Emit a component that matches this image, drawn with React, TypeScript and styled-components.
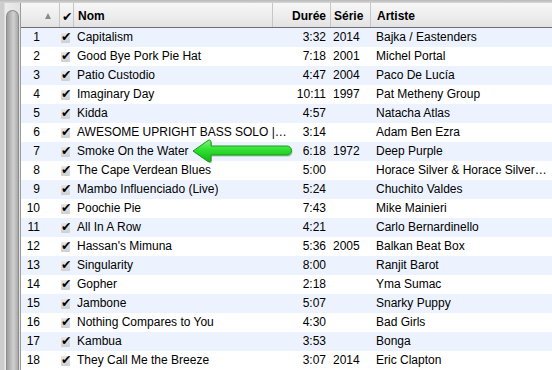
import React from "react";
import styled, { createGlobalStyle } from "styled-components";

interface Track {
  title: string;
  time: string;
  year: string;
  artist: string;
}

const tracks: Track[] = [
  { title: "Capitalism", time: "3:32", year: "2014", artist: "Bajka / Eastenders" },
  { title: "Good Bye Pork Pie Hat", time: "7:18", year: "2001", artist: "Michel Portal" },
  { title: "Patio Custodio", time: "4:47", year: "2004", artist: "Paco De Lucía" },
  { title: "Imaginary Day", time: "10:11", year: "1997", artist: "Pat Metheny Group" },
  { title: "Kidda", time: "4:57", year: "", artist: "Natacha Atlas" },
  { title: "AWESOME UPRIGHT BASS SOLO |…", time: "3:14", year: "", artist: "Adam Ben Ezra" },
  { title: "Smoke On the Water", time: "6:18", year: "1972", artist: "Deep Purple" },
  { title: "The Cape Verdean Blues", time: "5:00", year: "", artist: "Horace Silver & Horace Silver…" },
  { title: "Mambo Influenciado (Live)", time: "5:24", year: "", artist: "Chuchito Valdes" },
  { title: "Poochie Pie", time: "7:43", year: "", artist: "Mike Mainieri" },
  { title: "All In A Row", time: "4:21", year: "", artist: "Carlo Bernardinello" },
  { title: "Hassan's Mimuna", time: "5:36", year: "2005", artist: "Balkan Beat Box" },
  { title: "Singularity", time: "8:00", year: "", artist: "Ranjit Barot" },
  { title: "Gopher", time: "2:18", year: "", artist: "Yma Sumac" },
  { title: "Jambone", time: "5:07", year: "", artist: "Snarky Puppy" },
  { title: "Nothing Compares to You", time: "4:30", year: "", artist: "Bad Girls" },
  { title: "Kambua", time: "3:53", year: "", artist: "Bonga" },
  { title: "They Call Me the Breeze", time: "3:07", year: "2014", artist: "Eric Clapton" },
];

const GlobalStyle = createGlobalStyle`
  html, body {
    margin: 0;
    padding: 0;
    background: #fff;
  }
  body {
    font-family: "Liberation Sans", Arial, sans-serif;
    font-size: 12px;
    color: #000;
  }
`;

const COLUMNS = "38px 14px 199px 58px 40px 1fr";

const Window = styled.div`
  position: relative;
  width: 552px;
  height: 370px;
  overflow: hidden;
  display: flex;
  flex-direction: column;
`;

const TopStrip = styled.div`
  height: 3px;
  flex: none;
  background: linear-gradient(#b9b9b9, #d6d6d6);
`;

const Body = styled.div`
  flex: 1;
  display: flex;
  min-height: 0;
`;

const ScrollTrack = styled.div`
  flex: none;
  width: 21px;
  box-sizing: border-box;
  border-right: 1px solid #9c9c9c;
  background: linear-gradient(
    to right,
    #cdcdcd 0,
    #cdcdcd 4px,
    #ececec 5px,
    #e2e2e2 20px
  );
  padding: 7px 1px 0 6px;
`;

const ScrollThumb = styled.div`
  height: 100%;
  border: 1px solid #8c8c8c;
  border-bottom: none;
  border-radius: 7px 7px 0 0;
  background: linear-gradient(
    to right,
    #9d9d9d 0,
    #c4c4c4 45%,
    #d0d0d0 60%,
    #a9a9a9 100%
  );
`;

const Table = styled.div`
  flex: 1;
  display: flex;
  flex-direction: column;
  min-width: 0;
`;

const HeaderRow = styled.div`
  display: grid;
  grid-template-columns: ${COLUMNS};
  height: 24px;
  border-bottom: 1px solid #6e6e6e;
  background: linear-gradient(#f7f7f7, #ececec 60%, #e2e2e2);
  flex: none;
`;

const HeaderCell = styled.div<{ $align?: "left" | "right" | "center"; $pad?: string; $divider?: boolean }>`
  font-weight: bold;
  line-height: 21px;
  padding-top: 3px;
  text-align: ${(p) => p.$align || "left"};
  padding-left: ${(p) => (p.$align === "right" ? "0" : p.$pad || "0")};
  padding-right: ${(p) => (p.$align === "right" ? p.$pad || "0" : "0")};
  border-left: ${(p) => (p.$divider ? "1px solid #c6c6c6" : "none")};
  white-space: nowrap;
  overflow: hidden;
  box-sizing: border-box;
`;

const SortArrow = styled.span`
  display: inline-block;
  margin-left: 24px;
  width: 0;
  height: 0;
  border-left: 3.5px solid transparent;
  border-right: 3.5px solid transparent;
  border-bottom: 6px solid #8a8a8a;
  vertical-align: 1px;
`;

const Row = styled.div<{ $odd: boolean }>`
  display: grid;
  grid-template-columns: ${COLUMNS};
  height: 19px;
  line-height: 19px;
  flex: none;
  background: ${(p) => (p.$odd ? "#edf3fe" : "#ffffff")};
`;

const Cell = styled.div<{ $align?: "left" | "right"; $padLeft?: number; $padRight?: number; $clip?: boolean }>`
  text-align: ${(p) => p.$align || "left"};
  padding-left: ${(p) => p.$padLeft ?? 0}px;
  padding-right: ${(p) => p.$padRight ?? 0}px;
  white-space: nowrap;
  overflow: ${(p) => (p.$clip ? "hidden" : "visible")};
  box-sizing: border-box;
`;

const CheckCell = styled.div`
  display: flex;
  align-items: center;
  justify-content: flex-start;
  padding-left: 2px;
`;

const CheckBox = styled.span`
  position: relative;
  display: inline-block;
  width: 9px;
  height: 10px;
  background: linear-gradient(#e6e6e6, #cfcfcf);
  border-radius: 1px;
`;

const CheckMark = styled.span`
  position: absolute;
  left: 0px;
  top: -3px;
  font-family: "DejaVu Sans", sans-serif;
  font-size: 12.5px;
  line-height: 13px;
  color: #000;
`;

const HeaderCheck = styled.span`
  font-family: "DejaVu Sans", sans-serif;
  font-size: 12.5px;
  padding-left: 2px;
`;

const ArrowSvg = styled.svg`
  position: absolute;
  left: 188px;
  top: 136px;
  overflow: visible;
`;

const GreenArrow = () => (
  <ArrowSvg width="110" height="30" viewBox="0 0 110 30">
    <defs>
      <linearGradient id="arrowFill" x1="0" y1="0" x2="0" y2="1">
        <stop offset="0" stopColor="#7cf57c" />
        <stop offset="0.45" stopColor="#2fe02f" />
        <stop offset="1" stopColor="#14b414" />
      </linearGradient>
    </defs>
    <path
      d="M6,16.5 L21,6 Q24,4.5 24,7.5 L24,11.5 L100,11.5 A4.5,4.5 0 0 1 100,20.5 L24,20.5 L24,25 Q24,28 21,26.5 Z"
      fill="#0a5a0a"
      opacity="0.3"
    />
    <path
      d="M5,15 L20,4.5 Q23,3 23,6 L23,10 L99,10 A4.5,4.5 0 0 1 99,19 L23,19 L23,24 Q23,27 20,25.5 Z"
      fill="url(#arrowFill)"
      stroke="#1b9a1b"
      strokeWidth="1"
      strokeLinejoin="round"
    />
  </ArrowSvg>
);

export default function App() {
  return (
    <>
      <GlobalStyle />
      <Window>
        <TopStrip />
        <Body>
          <ScrollTrack>
            <ScrollThumb />
          </ScrollTrack>
          <Table>
            <HeaderRow>
              <HeaderCell>
                <SortArrow />
              </HeaderCell>
              <HeaderCell $divider>
                <HeaderCheck>✔</HeaderCheck>
              </HeaderCell>
              <HeaderCell $divider $pad="4px">Nom</HeaderCell>
              <HeaderCell $divider $align="right" $pad="4px">Durée</HeaderCell>
              <HeaderCell $divider $pad="3px">Série</HeaderCell>
              <HeaderCell $divider $pad="6px">Artiste</HeaderCell>
            </HeaderRow>
            {tracks.map((t, i) => (
              <Row key={i} $odd={i % 2 === 0}>
                <Cell $align="right" $padRight={19}>{i + 1}</Cell>
                <CheckCell>
                  <CheckBox>
                    <CheckMark>✔</CheckMark>
                  </CheckBox>
                </CheckCell>
                <Cell $padLeft={4}>{t.title}</Cell>
                <Cell $align="right" $padRight={4}>{t.time}</Cell>
                <Cell $padLeft={3}>{t.year}</Cell>
                <Cell $padLeft={6} $clip>{t.artist}</Cell>
              </Row>
            ))}
          </Table>
        </Body>
        <GreenArrow />
      </Window>
    </>
  );
}
